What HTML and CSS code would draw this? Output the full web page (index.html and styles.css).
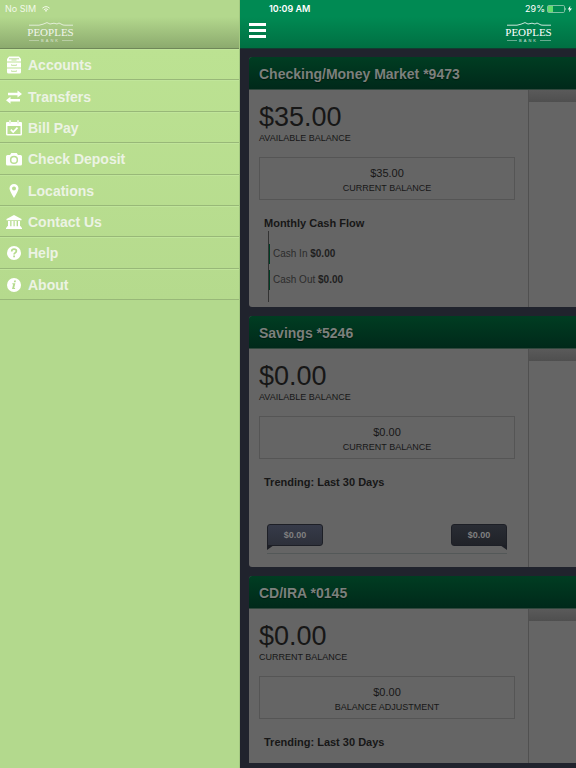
FILE: index.html
```
<!DOCTYPE html>
<html lang="en">
<head>
<meta charset="utf-8">
<meta name="viewport" content="width=device-width, initial-scale=1">
<title>Peoples Bank</title>
<link rel="stylesheet" href="styles.css">
</head>
<body>
<svg class="defs" aria-hidden="true">
  <symbol id="ridge" viewBox="0 0 44 4"><path d="M0 3.2H10L14 2.2L18 .6L21 2L25 1.2L28 2L30 1L34 3L36 3.2H44" fill="none" stroke="currentColor" stroke-width=".8"/></symbol>
</svg>
<div class="app">
  <aside class="side">
    <header class="side-head">
      <div class="status status-left"><span>No SIM</span>
        <svg width="8" height="6" viewBox="0 0 8 6"><path d="M.4 2.2Q4-1 7.6 2.2M1.8 3.7Q4 1.8 6.2 3.7" fill="none" stroke="currentColor" stroke-width="1"/><path d="M2.8 4.6Q4 3.6 5.2 4.6L4 6Z" fill="currentColor"/></svg>
      </div>
      <div class="logo"><svg class="ridge"><use href="#ridge"/></svg><span class="logo-name">PEOPLES</span><span class="logo-sub">BANK</span></div>
    </header>
    <nav class="menu">
      <a href="#"><svg viewBox="0 0 16 18"><path fill="currentColor" d="M3 .5H13L15 3V5.5H1V3ZM1 6.5H15V11.5H1ZM1 12.5H15V16Q15 17.5 13.5 17.5H2.5Q1 17.5 1 16Z"/><path d="M3 2.8H13M5.5 4H10.5M5.5 8.5V9.3H10.5V8.5M5.5 14.5V15.3H10.5V14.5" fill="none" stroke="#b9de91" stroke-width=".9"/></svg>Accounts</a>
      <a href="#"><svg viewBox="0 0 16 18"><path fill="currentColor" d="M2 4.8H11.5V2.4L16 6L11.5 9.4V7.2H2ZM14 11H4.5V8.8L0 12.2L4.5 15.8V13.4H14Z"/></svg>Transfers</a>
      <a href="#"><svg viewBox="0 0 16 18"><path fill="currentColor" fill-rule="evenodd" d="M1 3H3V1.5H5V3H11V1.5H13V3H15Q16 3 16 4V15Q16 16.5 14.5 16.5H1.5Q0 16.5 0 15V4Q0 3 1 3ZM1.5 7V15H14.5V7Z"/><path d="M4.8 10.6L7.2 13L11.5 8.6" fill="none" stroke="currentColor" stroke-width="1.7"/><path d="M4 2V4.5M12 2V4.5" stroke="#b9de91" stroke-width=".6"/></svg>Bill Pay</a>
      <a href="#"><svg viewBox="0 0 16 18"><path fill="currentColor" fill-rule="evenodd" d="M1.5 5H4L5.3 3H10.7L12 5H14.5Q16 5 16 6.5V14Q16 15.5 14.5 15.5H1.5Q0 15.5 0 14V6.5Q0 5 1.5 5ZM8 5.8A4.1 4.1 0 1 0 8 14A4.1 4.1 0 1 0 8 5.8ZM8 7.3A2.6 2.6 0 1 1 8 12.5A2.6 2.6 0 1 1 8 7.3Z"/></svg>Check Deposit</a>
      <a href="#"><svg viewBox="0 0 16 18"><path fill="currentColor" fill-rule="evenodd" d="M8 2A4.5 4.5 0 0 1 12.5 6.5Q12.5 8.5 8 16Q3.5 8.5 3.5 6.5A4.5 4.5 0 0 1 8 2ZM8 4.5A2 2 0 1 0 8 8.5A2 2 0 1 0 8 4.5Z"/></svg>Locations</a>
      <a href="#"><svg viewBox="0 0 16 18"><path fill="currentColor" d="M8 2L15.5 6V7.3H.5V6ZM2 8H4.2V13.5H2ZM5.5 8H7.5V13.5H5.5ZM8.7 8H10.6V13.5H8.7ZM12 8H14V13.5H12ZM1 13.2H15V14.4H16V16H0V14.4H1Z"/></svg>Contact Us</a>
      <a href="#"><svg viewBox="0 0 16 18"><circle cx="8" cy="9" r="7" fill="currentColor"/><path d="M5.7 7.4Q5.7 5.2 8 5.2Q10.4 5.2 10.4 7.1Q10.4 8.2 9 9Q8.1 9.5 8.1 10.4" fill="none" stroke="#b5db8d" stroke-width="1.7"/><path d="M7.2 11.4H9V13.2H7.2Z" fill="#b5db8d"/></svg>Help</a>
      <a href="#"><svg viewBox="0 0 16 18"><circle cx="8" cy="9" r="7" fill="currentColor"/><path d="M8.2 4.5H10L9.6 6.2H7.8ZM6.4 7.2H9.4L8.2 12H9.2L9 13H6L7.2 8.2H6.2Z" fill="#b5db8d"/></svg>About</a>
    </nav>
  </aside>
  <main class="main">
    <header class="top">
      <div class="status status-right"><time>10:09 AM</time><span class="batt">29%
        <svg width="26" height="8" viewBox="0 0 26 8"><rect x=".5" y=".5" width="17" height="7" rx="1.2" fill="none" stroke="#b4d9c6" stroke-width=".7"/><rect x="1" y="1" width="5" height="6" fill="#62dc6c"/><path d="M18.3 2.6Q19.5 4 18.3 5.4Z" fill="#fff"/><path d="M23.3.8L20.8 4.5H22.6L21.9 7.3L25 3.5H23Z" fill="#fff"/></svg></span></div>
      <button class="burger" type="button" aria-label="Menu"><i></i><i></i><i></i></button>
      <div class="logo"><svg class="ridge"><use href="#ridge"/></svg><span class="logo-name">PEOPLES</span><span class="logo-sub">BANK</span></div>
    </header>
    <div class="cards">
      <section class="card">
        <h2>Checking/Money Market *9473</h2>
        <div class="body">
          <div class="pane">
            <div class="amount">$35.00</div><div class="label">AVAILABLE BALANCE</div>
            <div class="box"><div class="box-amount">$35.00</div><div class="box-label">CURRENT BALANCE</div></div>
            <h3>Monthly Cash Flow</h3>
            <div class="flow"><div class="flow-row">Cash In <b>$0.00</b></div><div class="flow-row">Cash Out <b>$0.00</b></div></div>
          </div>
          <div class="detail"></div>
        </div>
      </section>
      <section class="card">
        <h2>Savings *5246</h2>
        <div class="body">
          <div class="pane">
            <div class="amount">$0.00</div><div class="label">AVAILABLE BALANCE</div>
            <div class="box"><div class="box-amount">$0.00</div><div class="box-label">CURRENT BALANCE</div></div>
            <h3>Trending: Last 30 Days</h3>
            <div class="trend"><span class="flag">$0.00</span><span class="flag flag-end">$0.00</span></div>
          </div>
          <div class="detail"></div>
        </div>
      </section>
      <section class="card card-last">
        <h2>CD/IRA *0145</h2>
        <div class="body">
          <div class="pane">
            <div class="amount">$0.00</div><div class="label">CURRENT BALANCE</div>
            <div class="box"><div class="box-amount">$0.00</div><div class="box-label">BALANCE ADJUSTMENT</div></div>
            <h3>Trending: Last 30 Days</h3>
          </div>
          <div class="detail"></div>
        </div>
      </section>
    </div>
  </main>
</div>
</body>
</html>
```
FILE: styles.css
```
* { box-sizing: border-box; }
body { margin: 0; font-family: "Liberation Sans", Arial, sans-serif; background: #20232d; }
.defs { position: absolute; width: 0; height: 0; }
.app { display: flex; min-height: 100vh; }

/* Slide-out menu */
.side { flex: none; width: 240px; background: #b3d98d; border-right: 1px solid #a3c880; }
.side-head { height: 49px; padding: 3px 5px 0; color: #f2f9e8; background: linear-gradient(#b3d88d 35%, #8caa6e); border-bottom: 1px solid #6f8759; }
.side-head .logo { margin: 8px 0 0 23px; opacity: .85; }
.status { display: flex; align-items: center; height: 11px; line-height: 11px; font-family: Inter, "Liberation Sans", sans-serif; font-size: 9px; }
.status-left { gap: 6px; }
.menu { display: grid; grid-template-rows: repeat(8, 1fr); height: 251px; background: linear-gradient(#bce292, #b5da8d); }
.menu a { display: flex; align-items: center; gap: 6px; padding: 1px 0 0 6px; color: #ecf3e4; font-size: 14px; font-weight: bold; text-decoration: none; border-top: 1px solid #c0e59a; border-bottom: 1px solid #98b878; }
.menu svg { width: 16px; height: 18px; color: #fff; }

/* Logo */
.logo { display: flex; flex-direction: column; align-items: center; width: 45px; color: #fff; font-family: "Liberation Serif", serif; }
.ridge { width: 44px; height: 4px; }
.logo-name { font-size: 11px; line-height: 12px; }
.logo-sub { display: flex; align-items: center; gap: 2px; width: 44px; font: 4px/5px "Liberation Sans", sans-serif; letter-spacing: 2px; opacity: .8; }
.logo-sub::before, .logo-sub::after { content: ""; flex: 1; height: 1px; background: currentColor; opacity: .5; }

/* Main column */
.main { flex: 1; min-width: 0; display: flex; flex-direction: column; overflow: hidden; }
.top { display: grid; grid-template: 11px 1fr / 1fr auto; height: 49px; padding: 3px 3px 0 9px; color: #fff; background: linear-gradient(#008a53 35%, #006f42); border-bottom: 1px solid #123c30; }
.top .logo { margin: 8px 22px 0 0; }
.status-right { grid-column: 1 / -1; justify-content: space-between; padding-left: 20px; }
.status-right time { font-weight: 600; }
.batt { display: flex; align-items: center; gap: 2px; }
.burger { display: grid; gap: 3px; align-self: start; justify-self: start; width: 17px; margin-top: 9px; padding: 0; border: 0; background: none; }
.burger i { height: 3px; background: #fff; }
.cards { display: grid; gap: 9px; padding: 8px 0 5px 9px; }

/* Account cards */
.card { overflow: hidden; border-radius: 3px 0 0 3px; background: #656565; color: #171717; }
.card-last { border-bottom-left-radius: 0; }
.card h2 { margin: 0; height: 33px; padding-left: 10px; color: #7c807d; background: linear-gradient(#003d22, #00291a); border-bottom: 1px solid #31483e; font-size: 14px; line-height: 34px; white-space: nowrap; text-shadow: 0 1px 1px #001a0e; }
.body { display: flex; }
.pane { flex: none; width: 279px; padding: 11px 13px 13px 10px; }
.amount { font-size: 27px; line-height: 32px; }
.label { margin-bottom: 14px; font-size: 9px; line-height: 10px; }
.box { padding: 8px 0 3px; border: 1px solid #555; text-align: center; line-height: 15px; }
.box-amount { font-size: 11px; }
.box-label { font-size: 9px; }
.card h3 { margin: 15px 0 0 5px; font-size: 11px; line-height: 16px; }
.detail { flex: 1; border-left: 1px solid #505050; background: linear-gradient(#5a5a5a, #4f4f4f) 0 0 / 100% 12px no-repeat, #656565; }
.flow { display: grid; align-content: center; gap: 6px; height: 71px; margin: 0 0 -8px 9px; border-left: 1px solid #333; }
.flow-row { height: 20px; padding-left: 3px; border-left: 1px solid #003d24; color: #2c2c2c; font-size: 10px; line-height: 20px; }
.flow-row b { color: #1e1e1e; }
.trend { display: flex; justify-content: space-between; margin: 34px 8px 0; padding-bottom: 7px; border-bottom: 1px solid #535858; }
.flag { position: relative; width: 56px; height: 22px; border: 1px solid #1d1f26; border-radius: 3px 3px 3px 0; background: linear-gradient(#363a49, #2d303a); color: #808080; font-size: 9px; font-weight: bold; line-height: 21px; text-align: center; }
.flag::after { content: ""; position: absolute; left: -1px; top: 20px; border-top: 5px solid #1d1f26; border-right: 7px solid transparent; }
.flag-end { border-radius: 3px 3px 0 3px; background: linear-gradient(#292c34, #202228); }
.flag-end::after { left: auto; right: -1px; border-right: 0; border-left: 7px solid transparent; }
```
